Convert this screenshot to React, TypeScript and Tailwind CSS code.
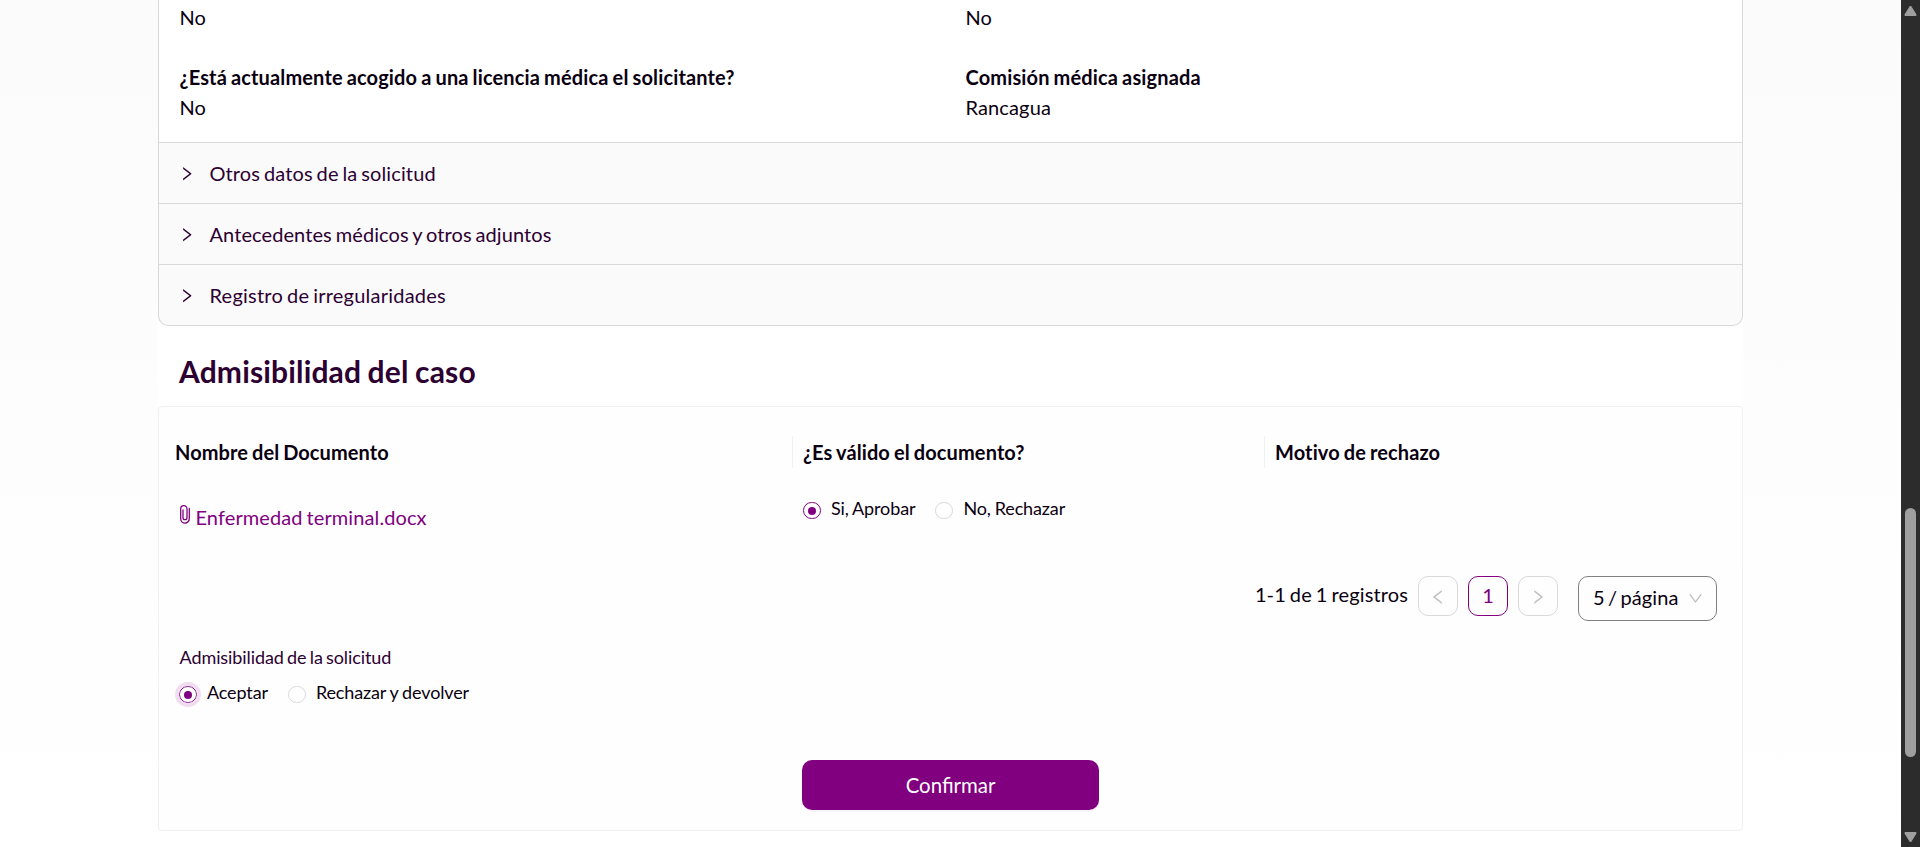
import { AiOutlineRight, AiOutlineLeft, AiOutlineDown } from "react-icons/ai";

const ICON_BOX = "64 64 896 896";

function Radio({ label, checked, focused }: { label: string; checked?: boolean; focused?: boolean }) {
  return (
    <label className="flex items-start">
      <span
        className={`mt-[7px] flex h-[17px] w-[18px] shrink-0 items-center justify-center rounded-full border bg-white ${
          checked ? "border-[#800080]" : "border-[#d9d9d9]"
        } ${focused ? "outline-[4px] outline-[#f0def0]" : ""}`}
      >
        {checked && <span className="size-2 rounded-full bg-[#800080]" />}
      </span>
      <span className="pl-[10px] text-[18px] leading-[27px] tracking-[-0.13px] text-[#0a0010] [word-spacing:-0.5px]">{label}</span>
    </label>
  );
}

function Field({ label, value }: { label: string; value: string }) {
  return (
    <div className="w-[786px] shrink-0">
      <div className="font-bold tracking-[0.14px] [word-spacing:-1px]">{label}</div>
      <div>{value}</div>
    </div>
  );
}

function PaperClip() {
  return (
    <svg viewBox="0 0 10 19" className="mt-[3px] ml-px h-[19px] w-[10px]" fill="none" stroke="#800080" strokeWidth="1.3" strokeLinecap="round">
      <path d="M9.3 3.5V13.5A4.3 4.6 0 0 1 .7 13.5V4A3.1 3.3 0 0 1 7 4V12.5A2 2.2 0 0 1 3 12.5V5" />
    </svg>
  );
}

const sections = [
  { title: "Otros datos de la solicitud", spacing: "tracking-[0.11px]" },
  { title: "Antecedentes médicos y otros adjuntos", spacing: "tracking-[0.09px]" },
  { title: "Registro de irregularidades", spacing: "tracking-[0.22px]" },
];

export default function App() {
  return (
    <div className="flex h-[847px] w-[1920px] overflow-hidden bg-white font-['Lato',sans-serif] text-[20px] leading-[30px] tracking-[0.13px] text-[#0a0010] [word-spacing:-1.3px]">
      <main className="flex h-full w-[1901px] justify-center bg-linear-to-b from-[#fbfbfb] to-white">
        <div className="h-full w-[1585px] bg-white">
          <section className="h-[326px] overflow-hidden rounded-b-[10px] border border-t-0 border-[#d9d9d9] bg-[#fafafa]">
            <div className="h-[142px] bg-white pl-[20.5px]">
              <div className="flex h-[62px] pt-[2px]">
                <div className="w-[786px]">No</div>
                <div>No</div>
              </div>
              <div className="flex">
                <Field label="¿Está actualmente acogido a una licencia médica el solicitante?" value="No" />
                <Field label="Comisión médica asignada" value="Rancagua" />
              </div>
            </div>
            {sections.map((s) => (
              <div key={s.title} className="flex h-[61px] items-center border-t border-[#d9d9d9] pl-5 text-[#2d0032]">
                <AiOutlineRight viewBox={ICON_BOX} className="mt-[2px] mr-[15px] size-[15.5px]" />
                <span className={s.spacing}>{s.title}</span>
              </div>
            ))}
          </section>
          <h2 className="h-[80px] pt-[25px] pl-[21px] text-[30px] leading-[40px] font-bold tracking-[0.16px] text-[#2d0032] [word-spacing:-1px]">
            Admisibilidad del caso
          </h2>
          <section className="h-[425px] rounded-[4px] border border-[#f0f0f0] bg-[#fefefe]">
            <div className="flex h-[61px] pt-[29px] pl-4 leading-[32px] font-bold tracking-[0.11px] [word-spacing:-1px]">
              <div className="w-[617px] tracking-[0.08px]">Nombre del Documento</div>
              <div className="w-[472px] border-l border-[#f0f0f0] pl-[10px]">¿Es válido el documento?</div>
              <div className="border-l border-[#f0f0f0] pl-[10px]">Motivo de rechazo</div>
            </div>
            <div className="flex h-[108px] pt-[27px]">
              <div className="flex w-[644px] items-start pt-[7px] pl-5 text-[#800080]">
                <PaperClip />
                <span className="pl-[5.5px] tracking-[0.1px]">Enfermedad terminal.docx</span>
              </div>
              <div className="flex gap-[20px]">
                <Radio label="Si, Aprobar" checked />
                <Radio label="No, Rechazar" />
              </div>
            </div>
            <div className="flex items-start justify-end pr-[25px]">
              <span className="mt-[3px] mr-[10px]">1-1 de 1 registros</span>
              <button className="mr-[10px] flex size-10 items-center justify-center rounded-[10px] border border-[#d9d9d9] text-[#bfbfbf]">
                <AiOutlineLeft viewBox={ICON_BOX} className="mt-px mr-px size-4" />
              </button>
              <button className="mr-[10px] flex size-10 items-center justify-center rounded-[10px] border border-[#800080] pb-[2px] text-[#800080]">1</button>
              <button className="mr-[20px] flex size-10 items-center justify-center rounded-[10px] border border-[#d9d9d9] text-[#bfbfbf]">
                <AiOutlineRight viewBox={ICON_BOX} className="mt-px mr-px size-4" />
              </button>
              <button className="flex h-[45px] w-[139px] items-center justify-between rounded-[10px] border border-[#808080] px-[13px]">
                <span className="pb-[3px] pl-px [word-spacing:-2px]">5 / página</span>
                <AiOutlineDown viewBox={ICON_BOX} className="size-[15px] text-[#bfbfbf]" />
              </button>
            </div>
            <div className="mt-[23px] pl-[20.5px] text-[18px] leading-[27px] tracking-[-0.08px] text-[#2d0032]">Admisibilidad de la solicitud</div>
            <div className="mt-2 flex gap-[20px] pl-5">
              <Radio label="Aceptar" checked focused />
              <Radio label="Rechazar y devolver" />
            </div>
            <button className="mx-auto mt-[54px] block h-[50px] w-[297px] rounded-[10px] bg-[#800080] text-[20.4px] tracking-normal text-white shadow-[0_2px_0_rgba(128,0,128,0.04)]">
              Confirmar
            </button>
          </section>
        </div>
      </main>
      <aside className="flex h-full w-[19px] flex-col items-center bg-[#2c2c2c]">
        <svg viewBox="0 0 13 10" className="mt-[6px] h-[10px] w-[13px]" fill="#9f9f9f">
          <path d="M5.5.6a1.2 1.2 0 0 1 2 0L12.2 8c.6 1 .2 2-.8 2H1.6C.6 10 .2 9 .8 8z" />
        </svg>
        <div className="mt-[492px] h-[249px] w-[11px] rounded-full bg-[#9f9f9f]" />
        <svg viewBox="0 0 13 10" className="mt-[75px] h-[10px] w-[13px]" fill="#9f9f9f">
          <path d="M5.5 9.4a1.2 1.2 0 0 0 2 0L12.2 2c.6-1 .2-2-.8-2H1.6C.6 0 .2 1 .8 2z" />
        </svg>
      </aside>
    </div>
  );
}
